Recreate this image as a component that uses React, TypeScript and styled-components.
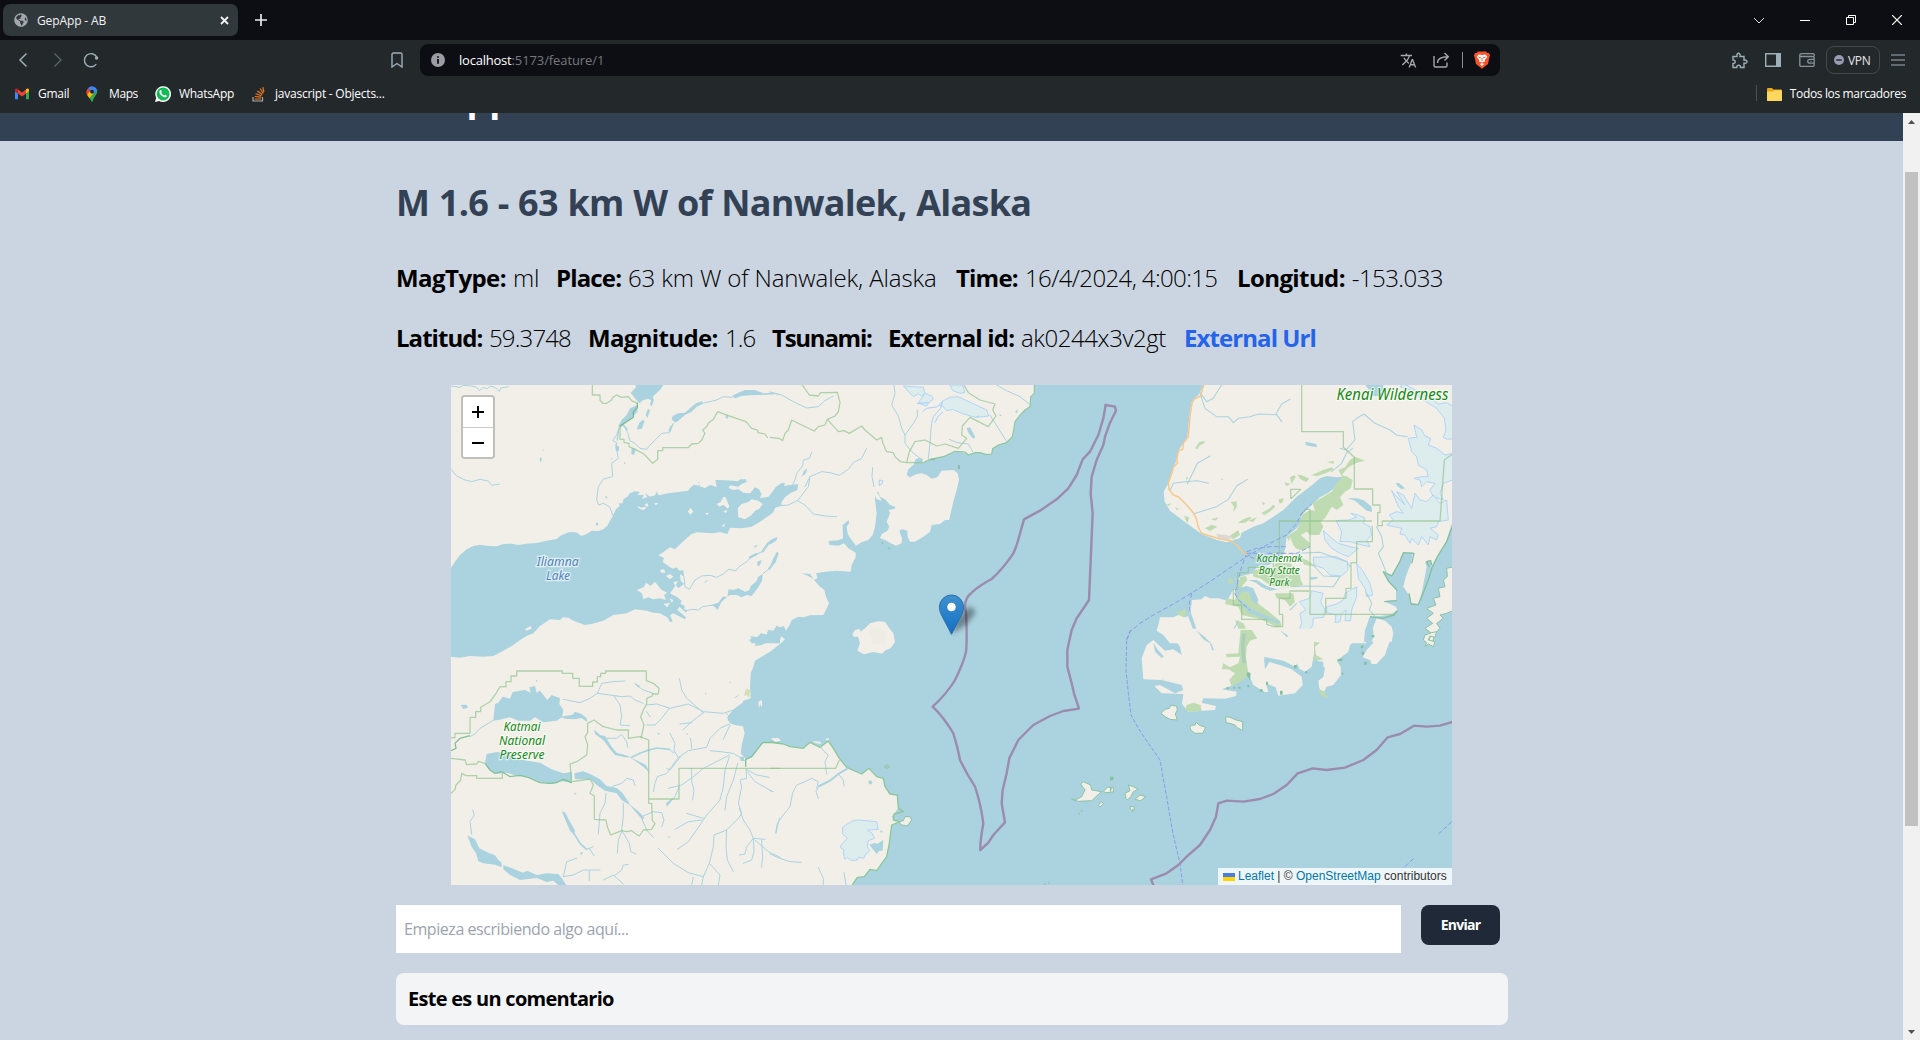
import React from "react";
import styled, { createGlobalStyle } from "styled-components";
import { FaGlobeAmericas } from "react-icons/fa";
import { MdTranslate } from "react-icons/md";

const GlobalStyle = createGlobalStyle`
  * { box-sizing: border-box; }
  html, body { margin: 0; padding: 0; }
  body { overflow: hidden; font-family: "Open Sans", "Noto Sans", sans-serif; }
`;

const Window = styled.div`
  width: 1920px;
  height: 1040px;
  display: flex;
  flex-direction: column;
  overflow: hidden;
`;

/* ---------- browser chrome ---------- */

const TabStrip = styled.div`
  height: 40px;
  background: #0d0e13;
  display: flex;
  align-items: center;
  padding: 0 18px 0 3px;
  color: #e8eaed;
`;
const Tab = styled.div`
  width: 235px;
  height: 32px;
  border-radius: 7px;
  background: #30383c;
  display: flex;
  align-items: center;
  padding: 0 9px 0 11px;
  font-size: 12px;
  color: #f1f2f3;
  svg { display: block; }
`;
const TabTitle = styled.span`
  flex: 1;
  margin-left: 9px;
  letter-spacing: -0.12px;
`;
const NewTab = styled.div`
  margin-left: 17px;
  display: flex;
`;
const WindowButtons = styled.div`
  margin-left: auto;
  display: flex;
  svg { display: block; }
`;
const Toolbar = styled.div`
  height: 40px;
  background: #23282b;
  display: flex;
  align-items: center;
  color: #9db0b8;
  svg { display: block; flex: none; }
`;
const NavButtons = styled.div`
  width: 391px;
  display: flex;
  align-items: center;
  padding-left: 18px;
`;
const Gap = styled.span<{ $w: number }>`
  width: ${(p) => p.$w}px;
  flex: none;
`;
const Omnibox = styled.div`
  width: 1080px;
  height: 32px;
  margin-left: 17px;
  border-radius: 8px;
  background: #0d0e13;
  display: flex;
  align-items: center;
  padding: 0 10px 0 11px;
  font-size: 13px;
  color: #ffffff;
`;
const Url = styled.span`
  margin-left: 14px;
  flex: 1;
  letter-spacing: -0.22px;
  span { color: #75787c; letter-spacing: -0.1px; }
`;
const Divider = styled.span<{ $h: number; $c: string }>`
  width: 1px;
  height: ${(p) => p.$h}px;
  background: ${(p) => p.$c};
`;
const ToolIcons = styled.div`
  margin-left: 231px;
  display: flex;
  align-items: center;
`;
const Vpn = styled.div`
  width: 54px;
  height: 28px;
  margin: 0 11px 0 11px;
  border: 1px solid #42494d;
  border-radius: 8px;
  display: flex;
  align-items: center;
  padding-left: 7px;
  gap: 4px;
  font-size: 12px;
  letter-spacing: -0.35px;
  color: #e6e7ea;
`;
const BookmarkBar = styled.div`
  height: 33px;
  background: #23282b;
  display: flex;
  align-items: flex-start;
  padding: 5px 14px 0 14px;
  font-size: 12px;
  line-height: 18px;
  color: #fff;
  svg { display: block; flex: none; }
`;
const Bookmark = styled.div<{ $w?: number; $ls: number; $g?: number }>`
  display: flex;
  align-items: center;
  height: 18px;
  gap: ${(p) => p.$g ?? 8}px;
  ${(p) => (p.$w ? `width: ${p.$w}px;` : "margin-left: 10px;")}
  letter-spacing: ${(p) => p.$ls}px;
  white-space: nowrap;
`;
const Push = styled.span`
  margin-left: auto;
`;

/* ---------- page ---------- */

const Viewport = styled.div`
  flex: 1;
  min-height: 0;
  display: flex;
`;
const Page = styled.div`
  width: 1903px;
  height: 927px;
  overflow: hidden;
  background: #cbd5e1;
`;
const Header = styled.header`
  height: 28px;
  overflow: hidden;
  background: #334155;
  padding-left: 372px;
`;
const Brand = styled.div`
  margin-top: -35px;
  font-size: 36px;
  line-height: 40px;
  font-weight: 700;
  color: #fff;
`;
const Main = styled.main`
  width: 1112px;
  margin-left: 396px;
  display: flex;
  flex-direction: column;
`;
const Title = styled.h1`
  margin: 42px 0 0;
  font-size: 36px;
  line-height: 40px;
  font-weight: 700;
  color: #334155;
  letter-spacing: -0.74px;
  word-spacing: 1px;
  white-space: nowrap;
`;
const Details = styled.div`
  margin-top: 40px;
  display: flex;
  flex-direction: column;
  gap: 28px;
`;
const DetailRow = styled.div`
  display: flex;
  height: 32px;
`;
const Detail = styled.div<{ $w: number }>`
  width: ${(p) => p.$w}px;
  display: flex;
  justify-content: flex-start;
  font-size: 24px;
  line-height: 30px;
  white-space: nowrap;
  color: #000;
`;
const Label = styled.b<{ $w: number; $ls: number }>`
  width: ${(p) => p.$w}px;
  font-weight: 700;
  letter-spacing: ${(p) => p.$ls}px;
`;
const Value = styled.span<{ $ls: number }>`
  font-weight: 350;
  letter-spacing: ${(p) => p.$ls}px;
`;
const ExternalLink = styled.a`
  font-size: 24px;
  line-height: 30px;
  font-weight: 700;
  color: #2563eb;
  letter-spacing: -0.92px;
`;
const MapBox = styled.div`
  position: relative;
  width: 1001px;
  height: 500px;
  margin: 30px 0 0 55px;
  overflow: hidden;
  background: #aad3df;
  svg.map { display: block; }
`;
const ZoomControl = styled.div`
  position: absolute;
  left: 10px;
  top: 10px;
  width: 34px;
  height: 64px;
  border: 2px solid rgba(0, 0, 0, 0.2);
  background-clip: padding-box;
  border-radius: 4px;
  overflow: hidden;
`;
const ZoomButton = styled.div`
  height: 30px;
  background: #fff;
  display: flex;
  align-items: center;
  justify-content: center;
  & + & { border-top: 1px solid #ccc; }
`;
const Attribution = styled.div`
  position: absolute;
  right: 0;
  bottom: 0;
  width: 234px;
  height: 17px;
  padding: 0 5px;
  background: rgba(255, 255, 255, 0.8);
  display: flex;
  align-items: center;
  font-family: "Liberation Sans", Arial, sans-serif;
  font-size: 12px;
  line-height: 17px;
  color: #333;
  white-space: pre;
  svg { margin-right: 3px; }
  a { color: #0078a8; }
`;
const CommentForm = styled.div`
  margin-top: 20px;
  display: flex;
  align-items: flex-start;
  gap: 20px;
`;
const CommentInput = styled.div`
  width: 1005px;
  height: 48px;
  padding: 0 8px;
  background: #fff;
  color: #9ca3af;
  font-size: 16px;
  line-height: 48px;
  letter-spacing: -0.44px;
`;
const SendButton = styled.div`
  width: 79px;
  height: 40px;
  border-radius: 8px;
  background: #1f2937;
  color: #fff;
  font-size: 14px;
  font-weight: 700;
  line-height: 39px;
  text-align: center;
  letter-spacing: -0.75px;
`;
const Comment = styled.div`
  margin-top: 20px;
  height: 52px;
  padding: 0 12px;
  border-radius: 8px;
  background: #f3f4f6;
  font-size: 20px;
  font-weight: 700;
  line-height: 52px;
  letter-spacing: -0.72px;
`;
const Scrollbar = styled.div`
  width: 17px;
  background: #f1f1f1;
  display: flex;
  flex-direction: column;
  align-items: center;
  svg { display: block; }
`;
const ScrollArrow = styled.div`
  height: 17px;
  width: 17px;
  display: flex;
  align-items: center;
  justify-content: center;
`;
const Thumb = styled.div`
  width: 13px;
  height: 654px;
  margin-top: 42px;
  margin-bottom: auto;
  background: #c1c1c1;
`;

/* ---------- map drawing ---------- */

const LAND = "#f2efe9";
const WATER = "#aad3df";
const FOREST = "#bedbb1";
const ICE = "#ddecec";

const Tile = ({ x, y, children }: { x: number; y: number; children: React.ReactNode }) => (
  <g transform={`translate(${x} ${y}) scale(.333333)`}>{children}</g>
);
const Land = ({ d }: { d: string }) => <path d={d} fill={LAND} />;
const Coast = ({ d }: { d: string }) => <path d={d} fill={LAND} stroke="#8cc3a4" strokeWidth="3" />;
const Lake = ({ d }: { d: string }) => <path d={d} fill={WATER} />;
const Wood = ({ d }: { d: string }) => <path d={d} fill={FOREST} />;
const Ice = ({ d }: { d: string }) => <path d={d} fill={ICE} stroke="#a5d0fa" strokeWidth="2.5" strokeLinejoin="round" />;
const River = ({ d, w = 3 }: { d: string; w?: number }) => (
  <path d={d} fill="none" stroke={WATER} strokeWidth={w} strokeLinejoin="round" strokeLinecap="round" />
);
const Border = ({ d }: { d: string }) => (
  <path d={d} fill="none" stroke="#8dc38a" strokeOpacity=".68" strokeWidth="3.8" strokeLinejoin="round" />
);
const Maritime = ({ d }: { d: string }) => (
  <path d={d} fill="none" stroke="#9b8bad" strokeWidth="7.2" strokeLinejoin="round" strokeLinecap="round" />
);
const Ferry = ({ d, dash = "14 7" }: { d: string; dash?: string }) => (
  <path d={d} fill="none" stroke="#8597ec" strokeWidth="2.8" strokeDasharray={dash} />
);

type LabelProps = { x: number; y: number; size: number; w: number; fill: string; children: string };
const MapLabel = ({ x, y, size, w, fill, children }: LabelProps) => (
  <text
    x={x}
    y={y}
    textAnchor="middle"
    textLength={w}
    lengthAdjust="spacingAndGlyphs"
    fontFamily='"Noto Sans", "Open Sans", sans-serif'
    fontStyle="italic"
    fontSize={size}
    fill={fill}
    stroke="#ffffff"
    strokeOpacity=".65"
    strokeWidth="2.4"
    paintOrder="stroke"
  >
    {children}
  </text>
);

const MapDrawing = () => (
  <svg className="map" width="1001" height="500" viewBox="451 385 1001 500">
    <defs>
      <linearGradient id="pin" x1="0" y1="0" x2="0" y2="1">
        <stop offset="0" stopColor="#3f92cf" />
        <stop offset="1" stopColor="#126fc6" />
      </linearGradient>
      <filter id="soft" x="-50%" y="-50%" width="200%" height="200%">
        <feGaussianBlur stdDeviation="2.6" />
      </filter>
    </defs>
    <rect x="451" y="385" width="1001" height="500" fill={WATER} />

    {/* northwest mainland */}
    <Tile x={440} y={380}>
      <Land d="M30 10H994V756H30Z" />
    </Tile>
    <Tile x={770} y={380}>
      <Land d="M-5 12H794L793 40 782 50 780 80 765 90 750 105 735 125 731 150 727 172 710 188 685 195 668 206 665 222 650 224 630 218 615 218 595 225 585 218 555 214 520 230 480 238 458 248 458 236 450 233 437 238 430 255 415 268 410 285 420 292 440 282 455 280 470 285 485 296 502 292 515 272 550 270 563 280 567 300 560 330 550 365 543 395 537 420 525 420 510 432 485 435 480 455 460 470 435 485 420 485 413 470 412 452 395 447 388 453 396 475 395 490 378 497 360 488 345 480 330 475 335 462 352 452 358 440 350 425 360 400 356 390 374 386 376 380 360 375 345 358 330 350 325 337 316 335 315 360 320 400 315 440 308 465 295 480 275 487 258 497 245 480 233 462 230 440 237 430 236 420 218 435 219 475 205 481 176 483 178 495 205 497 222 490 235 505 257 518 257 532 245 555 242 575 200 572 165 575 138 580 143 594 132 600 120 582 95 580 115 588 130 598 150 620 163 630 168 650 177 670 168 690 160 705 120 706 100 712 85 710 65 720 60 732 48 752 42 738 30 742 20 737 5 760-5 775Z" />
      <Land d="M310 335L316 330 330 352 335 362 320 358Z" />
    </Tile>
    <Tile x={440} y={630}>
      <Land d="M30-4H993L1012 10 1035 28 1020 42 990 65 965 80 945 92 940 110 932 130 930 170 932 205 910 212 905 235 880 238 862 262 864 272 885 285 908 285 914 310 905 345 902 370 918 388 935 380 955 355 968 338 1000 337 1022 341V768H30Z" />
      <Lake d="M928 18L950 22 965 10 980 14 985 0 1000 5 1010-4 1025 10 1020 34 985 34 965 45 945 48 948 35Z" />
      <Land d="M975 38L985 20 992 26 990 36Z M955 215L965 209 967 230 962 228 962 218 957 235Z" />
    </Tile>
    <Tile x={770} y={630}>
      <Land d="M-4 336L40 342 60 350 100 355 120 337 150 352 175 333 190 355 208 385 230 412 275 432 297 415 320 440 340 445 345 470 360 492 382 495 385 535 365 560 372 570 390 575 365 585 358 640 350 680 320 722 300 718 283 740 262 742 245 768H-4Z" />
      <Land d="M0 30L20 25 42 30 25 42 5 60 0 62Z M0-2L10-2 18 4 0 8Z M2 325L25 324 33 332 15 335Z M128 333L150 335 155 341 138 340Z M165 326L177 325 175 333Z" />
      <Land d="M248 12L255 0 268-3 272 5 285-5 300-20 325-26 345-25 358-5 370 10 375 35 362 55 348 60 335 71 310 66 282 73 262 62 270 40 264 20 250 20Z" />
      <path d="M295 0L325-10 350 15 345 45 310 40Z" fill="#e9ebdf" opacity=".5" />
    </Tile>

    {/* Iliamna lake and its surroundings */}
    <Tile x={440} y={380}>
      <Lake d="M30 568L45 545 60 525 80 508 100 498 120 494 145 498 170 499 190 492 215 491 235 495 260 491 290 489 320 482 350 477 360 468 385 457 400 456 412 458 422 467 432 466 445 459 455 452 475 453 490 448 502 437 510 422 518 408 528 388 540 377 535 370 548 370 550 358 562 350 570 340 585 334 600 336 592 344 612 346 606 356 622 352 615 340 630 350 645 346 650 335 656 346 685 340 720 335 745 332 750 324 762 314 780 318 772 304 765 300 778 308 776 318 795 324 812 314 830 322 826 300 860 301 895 304 900 298 918 298 920 306 905 312 895 320 870 316 866 324 880 330 895 328 910 338 930 340 945 322 957 328 965 342 960 355 985 350 1000 335 1024 308V376L1005 384 1000 397 990 405 960 425 935 440 905 445 870 443 862 462 840 456 820 460 770 457 755 462 745 470 725 488 705 508 690 502 665 520 655 526 672 534 668 546 690 562 700 566 710 562 718 572 730 570 732 590 720 582 722 602 732 612 715 625 708 615 690 640 710 650 725 662 722 672 735 678 732 688 742 690 738 698 718 680 712 690 738 712 735 718 700 700 690 705 698 724 690 727 682 712 660 700 640 698 620 692 585 688 560 700 520 705 490 722 455 732 435 735 400 722 385 713 370 712 360 720 330 718 300 738 280 760 260 768 240 780 220 795 190 812 160 828 130 830 90 828 60 833 30 830Z" />
      <Land d="M590 630L612 621 618 608 632 618 645 605 655 618 665 630 682 638 672 645 678 660 660 655 640 658 625 652 610 658 606 640Z M893 385L905 372 925 366 935 358 955 362 968 372 958 386 945 392 935 405 915 418 895 412Z" />
      <Land d="M592 378L605 383 615 380 618 385 610 390 598 386Z M614 372L622 370 626 378 618 380Z M642 370L655 368 648 376Z M830 372L842 366 850 352 856 350 860 360 868 378 864 386 850 374 838 380Z M743 395L752 384 760 395 752 404Z M795 400L806 398 803 406Z M832 435L845 438 856 430 852 440Z M256 746L272 738 275 746 258 752Z M850 394L862 390 858 400Z M908 330L922 328 930 336 920 338Z" />
      <Land d="M678 588L690 582 700 590 690 598Z M700 606L714 604 706 618Z M660 570L672 568 676 578 664 578Z M688 655L700 660 696 668Z M670 672L690 668 682 682Z" />
      <Lake d="M630 528L640 520 652 524 644 532Z M598 552L612 546 606 556Z" />
      <Lake d="M585 12H672L660 30 640 48 635 62 625 56 610 60 598 70 585 55 572 38 588 22Z M592 75V95L575 115 555 130 540 144 535 138 545 120 560 105 570 85Z M590 148L598 128 608 120 614 124 605 147Z M617 104L624 86 630 92 622 114Z M630 72L638 50 642 60 635 80Z M575 205L588 206 582 226 574 222Z M526 192L538 202 535 215 527 210Z M300 232L306 236 303 248 299 240Z M468 428L475 428 474 437 468 436Z M495 348L504 352 498 356Z M858 105L865 108 862 118 856 112Z M308 208H311V213Z M552 246L557 250 552 253Z M510 236L520 234 516 238Z" />
      <Lake d="M785 64L792 70 770 80 755 95 735 105 715 122 705 128 695 118 698 108 715 100 735 98 750 85 768 70Z M876 48L885 55 905 48 930 46 960 45 1003 43 1003 38 970 40 945 30 915 30 895 38Z M700 130L690 140 685 152 692 155Z" />
      <River d="M792 69L830 60 850 50 876 52M700 130L688 158 665 160 648 178 630 195 620 208 600 205 585 190 570 182 563 158 550 135 538 142 530 165 518 182 530 188 528 200 535 235 515 250 518 290 490 297 475 320 470 360 476 375 490 370 510 382 518 405" />
      <River w={4} d="M536 145L532 180M550 135L562 148" />
      <River d="M33 268L50 288 75 300 95 305 120 298 145 303 155 316 178 312M1003 40L1020 44M33 18L60 22 70 16 95 18 110 22 118 32 130 22 142 26 150 18 165 22 178 35 182 24 205 20" />
      <River w={7} d="M1008 476L985 490 968 514M950 522L930 532M1012 520L1004 545 988 566" />
      <River d="M968 514L935 530 920 545 895 562 888 572 865 568 850 582 830 592 810 586 785 588 765 600 748 628 735 620 732 590M740 692L755 688 775 690 788 680 815 676M795 608L802 600M988 566L970 580" />
      <Lake d="M968 582L966 602 955 622 945 635 935 648 920 645 905 652 890 645 870 645 860 652 845 665 832 690 826 682 812 675 835 668 848 650 862 650 866 628 880 630 895 625 915 635 928 630 932 618 948 605 955 590Z M952 545L965 540 960 556 952 558Z M942 498L955 495 945 503Z M928 780L940 770 955 772 962 760 980 765 985 750 1000 752 1010 740 1020 745V790H935Z" />
      <Border d="M457 12V45H480V60L488 70H500L515 60 518 52 530 45 545 52 565 50 575 62 592 70V80L580 95V112L540 138V178H552V187L567 190V200L585 208 612 222 638 250 653 238V212H668V203H745L755 192 775 190 785 180 795 160 788 150 800 140 805 130 820 118 833 95 865 107 918 125 935 145 952 150 955 158 975 162 983 174" />
      <path d="M592 68V85L580 95V112L540 138" fill="none" stroke="#6fb48e" strokeWidth="3" />
    </Tile>

    {/* coast west of the inlet */}
    <Tile x={770} y={380}>
      <Lake d="M0 345L18 320 35 310 45 308 42 318 55 316 85 312 82 330 60 340 45 352 30 372 0 392Z M0 480L22 472 18 482 0 494Z M0 560L10 535 22 515 26 522 12 548Z M95 290L102 272 112 265 108 280Z M590 145L600 142 616 172 610 176 596 160Z" />
      <Ice d="M400 18L430 50 445 42 455 48 465 40 460 22Z M465 40L485 48 490 58 478 66 470 78 445 70 452 58Z M520 62L540 52 565 50 590 62 625 78 650 90 656 108 640 110 615 112 575 100 548 88 530 92 520 80 505 76Z M540 15L548 32 570 40 585 38 578 15Z" />
      <path d="M518 62L512 85 490 110 484 135M520 95L505 108 495 128M440 70L475 68M458 95L470 85 505 80M328 300L338 302 336 312 328 316Z" fill="none" stroke="#a5d0fa" strokeWidth="3" />
      <River d="M0 36L35 45 70 65 110 84 145 80 165 62 190 48M0 380L55 375 85 360 92 350 115 320 120 290 155 275 180 278 208 286 235 268 250 248 275 235 290 205M82 362L105 375 130 402 165 408 200 410M125 218L118 235 100 240 98 258 80 280 75 300 62 325 58 340M308 262L306 290 312 320M372 15L375 40 365 75 385 108 395 145 405 165 405 190 425 215 450 235M405 165L430 130 443 108 442 90M484 135L480 190 475 235M680 15L710 32 750 50 778 72M660 105L685 145 712 188M538 178L560 188 595 192 608 215M120 290L105 320" />
      <Border d="M95 12L118 45 145 48 152 38 175 38 202 37 210 68 205 95 195 108 172 118 205 155 222 152 238 160 275 138 285 150 320 180 335 172 338 188 350 215 370 218 375 230 392 245 410 248H460M0 172L30 176 38 182 45 160 55 150 65 120 95 135 133 153 145 140 165 135 172 118M410 248L418 215 435 185 465 180 500 198 525 192 565 205 590 175 575 165 577 138 600 112 625 125 655 140 678 108 668 90 675 72 630 60 595 38 582 15" />
      <path d="M460 248L480 238 520 230 555 214 585 216 595 225 615 218 630 218 650 224 665 222 668 206 685 195 710 188 727 170 731 150 735 125 750 105 765 90 780 80 782 50 793 40V12" fill="none" stroke="#8dc79b" strokeWidth="3.4" />
      <Lake d="M688 102L696 106 690 109Z M735 95L743 88 742 100Z M618 110L628 105 622 114Z" />
      <path d="M564 256H570V267H564ZM352 500L362 506 358 509ZM335 485L340 488 337 494ZM482 236H495V241H482Z" fill="#84c0a0" />
    </Tile>

    {/* Katmai */}
    <Tile x={440} y={630}>
      <Lake d="M160 272L165 222 175 218 188 200 210 206 218 186 255 180 272 188 268 172 285 168 290 188 300 182 322 210 335 195 360 205 358 222 370 240 366 262 350 272 310 277 285 262 270 272 235 272 210 262 175 270Z M362 260L398 254 405 245 425 252 440 265 442 277 425 264 405 268 375 266Z M62 225L80 224 84 233 70 237Z M287 150H292L289 158Z" />
      <Lake d="M135 398L140 372 170 366 200 370 235 388 300 398 335 418 370 430 395 426 396 458 360 453 340 462 300 455 265 440 230 438 200 428 165 432 150 420Z M403 430L430 424 455 434 480 448 500 468 530 474 548 490 565 515 570 526 545 510 530 490 495 482 470 465 450 448 405 448Z M565 520L600 548 612 562 608 570 590 550Z M582 158L600 168 596 173Z" />
      <Lake d="M82 616L105 628 118 655 145 668 165 676 175 690 185 698 185 712 165 704 130 700 115 694 108 670 95 650Z M190 705L220 716 248 728 262 722 290 735 320 730 355 732 368 748 380 768H358L340 752 320 756 290 744 240 750 210 735 190 718Z M365 544L376 548 390 575 405 602 402 615 390 602Z M404 487L410 491 404 494Z M420 668L430 666 424 676Z M462 298L480 315 495 318 515 350 530 368 555 375 575 382 555 382 525 375 508 355 490 330 465 312Z M678 520L700 502 690 520 680 528Z M570 382L600 396 618 405 630 430 610 410Z" />
      <River w={5} d="M402 610L420 640 440 658M575 382L600 370 620 362 650 354 688 358" />
      <River d="M440 658L460 650M448 655L462 677M90 320L105 312 120 295 145 280 160 270M370 208L420 218 450 205 472 190 485 160 520 155 555 153M472 190L510 195 545 200 570 198 585 210 610 220M522 198L540 225 545 260 540 285 568 287M585 162L610 180 640 190M98 540L103 555 90 575 95 612M620 225L650 222 690 235 745 222 790 245 850 250 880 240M718 145L725 180 740 205 790 248M688 235L665 265 645 285 620 285M620 245L630 260M790 248L755 275 728 300M720 282L755 278M500 325L530 325 545 313 560 335 563 352M755 355L752 325M690 310L705 340 702 362 715 382 745 362 800 352 810 325 840 295 868 282M870 285L850 328M722 380L690 420 680 415M688 358L702 370M715 382L695 410 680 430 652 440 645 460 640 485M868 375L820 400 790 415 760 440 725 465 685 475M810 362L850 366 880 370 915 392M755 415V455L762 480 758 510M718 470L705 500 680 528M868 380L855 420 850 470 840 510 800 555 770 600 745 635 712 658M785 570L745 575 705 598M740 550L790 565M893 400L880 450 860 500 855 540M918 420L920 445 900 450 905 470 895 520 905 550 895 565 860 600 822 615 820 650 808 700 790 740M860 600L858 650 862 690 880 725M898 535L910 570 930 600 940 625 975 628M940 625L920 650 915 672 898 675M940 625L942 665 935 690 910 700M965 630L968 680 965 712M945 630L985 665 1020 682M655 655L700 700 745 728 790 740 785 765M808 700L840 735 835 765M755 765L760 742M918 418L950 435 988 442M922 425L945 455 998 485M1018 565L1008 610M498 490L495 520 480 550 475 612M515 470L545 460 560 445 580 450 585 467M550 520V560L545 600 568 640 572 665 588 672M545 605L535 630 532 670M605 565L620 600 640 622M605 560L640 545 665 548 672 570 665 590M370 740L380 695 410 685M370 740L400 735 430 720 480 720M448 722V752M490 750L520 735 550 762M522 738L545 720 550 705 565 703M858 250L875 265 890 238" />
      <path d="M918 175L930 180 928 205 920 195 912 198ZM908 182L918 177" fill="#d5dfb5" />
      <Lake d="M865 260L885 235 915 212V290L885 285 870 280Z M652 308L660 310 656 315Z M868 155L874 157 870 160Z M682 618L690 620 688 625Z M900 380H912V393H902Z M740 308L745 312 740 315Z M795 188L800 191 796 194Z M880 205L900 192 890 202Z" />
      <Border d="M33 323H45V310H90V262H107V245H122V232L150 215 165 195 180 170H198V155H213V138H230V123H367V130H398V145H418V169H458V156H472V140H482V130H497V123H619V152L640 160 657 175 655 192H637V198L620 205V222L610 240 602 260 612 285 603 325" />
      <Border d="M33 385L75 390 80 404 110 402 115 394 135 400M395 458L390 402 410 395 440 375 443 345 435 320 443 308 443 280 462 270 490 290 530 300H565V325L600 320 626 330V507H717V415H1020M33 490L45 478 48 465 62 450 65 430 78 437H110V445H187V430M397 455L450 447 460 465 450 490 463 498V568L498 570 502 590 512 615 545 602 560 605 575 602 588 612 598 618 610 600 635 598 645 580 637 572 635 520H626V507" />
      <path d="M33 362L48 355 45 340 60 325 90 317M135 400L150 420 165 430 185 425 210 440 240 436 265 442 300 458 330 460 350 458 370 448 395 458M917 410V388L935 380 968 338 1000 337 1022 341" fill="none" stroke="#83c196" strokeWidth="4" />
    </Tile>

    {/* south cape */}
    <Tile x={770} y={630}>
      <path d="M0 336L40 342 60 350 100 355 120 337 150 352 175 333 190 355 208 385 230 412 275 432 297 415 320 440 340 445 345 470 360 492 382 495 385 535 400 545 372 552 370 570 390 575 365 585 358 640 350 680 320 722 300 718 283 740 262 742 245 768" fill="none" stroke="#8dc79b" strokeWidth="4" strokeLinejoin="round" />
      <Coast d="M388 575L400 572 405 560 420 560 425 570 412 588 392 584Z" />
      <Ice d="M218 612L218 592 235 580 250 572 265 570 320 575 325 598 292 600 305 608 314 625 295 632 292 650 300 662 285 675 282 685 265 682 262 690 245 692 232 682 225 688 220 672 222 660 210 652 218 640 232 625Z" />
      <Lake d="M298 644L315 638 322 642 340 630 338 662 328 662 320 672Z M294 455L302 450 308 458 300 464Z M330 600L340 605 333 608Z" />
      <River w={6} d="M232 416L205 432 180 452 148 468" />
      <River d="M148 468L138 485 145 505M140 475L145 455 125 445 105 455 80 465 68 488 60 530 40 555 22 580 17 608M205 432L220 450 222 468M150 345L160 362 175 375 165 395 170 432M0 672L30 685 60 695 95 697M145 712L160 745V765M222 728L228 765M0 482L10 485" />
      <Border d="M0 415H197L208 390M350 405L358 410 350 415 344 410Z" />
      <Coast d="M905 508L920 508 935 500 945 480 932 462 940 455 962 465 965 480 995 485 978 500 965 512 925 514Z M985 525L995 516 1001 520 990 531Z M1000 484L1012 472 1030 472 1030 486 1008 488Z" />
      <path d="M933 540L939 542 934 546ZM926 548L930 550 927 554ZM820 762L826 760 826 766ZM835 756L840 759 836 761Z" fill="#84c0a0" />
    </Tile>

    {/* Kenai peninsula */}
    <Tile x={1110} y={380}>
      <Land d="M284 12L265 45 245 65 238 110 232 170 205 212 200 240 188 265 175 310 161 335 164 365 180 392 230 430 275 462 320 480 350 487 390 474 395 458 430 440 460 430 520 390 560 350 600 320 630 295 650 288 680 292 697 290 690 310 655 338 630 352 608 372 585 395 575 405 572 430 560 445 530 470 525 510 510 540 475 555 440 560 430 580 385 590 385 620 370 628 350 665 345 660 325 655 300 655 285 648 275 658 245 660 245 672 240 690 235 708 225 712 205 705 190 712 150 712 145 735 140 752 160 765 180 790H768L768 750 778 712 800 708 820 725 845 735 848 760V700L862 690 858 680 822 664 858 660V630L835 605 820 575 845 585 870 545 880 520 908 517 903 550 887 590 880 620 900 650 905 672 925 672 935 640 950 560 945 545 960 540 965 560 1000 510 1010 480 1026 430H1032V12Z" />
      <Lake d="M1026 445L1010 490 985 525 967 560 955 600 935 650 925 672 905 670 880 625 865 630 862 700 835 705 780 712 765 750 762 785H1032V555Z" />
      <Land d="M785 785L795 762 788 745 800 715 825 722 845 740 850 760 845 785Z" />
      <Coast d="M1032 560L1010 565 1012 590 1000 600 1005 620 985 625 990 650 970 655 978 675 950 685 970 700 950 715 968 730 945 745 965 760 955 785H968L975 760 990 745 980 730 1000 715 990 705 1010 700 1032 690Z" />
      <path d="M1032 425L1010 485 985 525 967 560 955 600 935 650 925 674 903 672 897 640M905 550L912 520 880 518 868 548 845 588 820 575 836 604 862 632M958 560L950 545 962 542 965 555M862 692L852 705 818 715 780 710M823 665L860 662" fill="none" stroke="#84bf9c" strokeWidth="4" strokeLinejoin="round" />
      <path d="M764 12L790 48H820V12Z" fill={WATER} />
      {/* woods */}
      <Wood d="M685 270L705 262 720 240 735 230 765 242 740 248 715 262 695 285 712 290 728 300 722 325 705 335 690 352 700 375 680 390 665 380 645 415 632 425 640 440 628 465 600 465 590 455 572 465 600 490 600 510 570 510 545 500 530 470 560 450 572 430 575 405 600 390 615 392 608 370 640 350 665 335 680 310 697 292Z" />
      <Wood d="M495 550L540 548 548 558 520 575 535 585 550 560 570 585 572 600 580 615 545 622 515 622 480 615 450 595 430 590 428 572 455 565 490 570Z M390 590L408 588 412 600 395 620 410 635 440 650 450 675 470 690 510 722 515 738 500 742 470 725 440 715 395 705 385 680 345 672 350 655 375 660 380 640Z M495 640L550 640 555 665 540 680 525 660 500 655Z M560 530L590 540 620 560 585 555Z" />
      <Wood d="M353 598L368 595 370 610 356 612Z M200 695L225 688 232 700 220 712 200 700Z M375 720L400 730 415 760 410 785H390L385 745Z M255 205L268 186 285 182 280 192 270 195 262 208Z M540 292L552 286 558 290 550 302 545 312Z M562 284L575 286 598 296 588 306 572 298Z M605 285L640 270 665 262 672 268 650 278 620 289Z M650 245L672 243 670 252Z M362 366L380 364 380 382 370 396 372 380Z M355 470L385 450 390 465 370 478Z M168 374L182 370 178 378Z M195 382L208 387 200 390Z M228 292L234 292 230 305Z M335 295L340 298 334 302Z M382 430L400 418 418 410 425 414 405 428Z M455 398L475 388 490 374 496 380 478 396 462 406Z M222 408L238 412 232 430Z M285 445L305 434 322 440 300 453Z M506 358L522 354 516 370 508 370Z M522 307L542 311 530 318Z M415 422L440 412 430 426Z M302 418L325 412 318 422Z M455 365L465 370 460 376Z" />
      <Land d="M415 605L435 605 455 625 465 655 450 675 430 655 420 625Z M540 470L550 495 565 515 545 520 535 495Z M600 500L605 530H545L570 515Z" />
      <path d="M318 462L350 465 368 472 355 480 325 474Z" fill="#dcd9d4" />
      <Lake d="M415 600L440 600 470 618 500 628 540 622 480 632 455 622 438 608Z M385 625L410 618 430 625 445 660 440 675 425 660 418 640 400 632 380 650 400 668 430 690 465 705 510 725 505 732 460 715 420 700 392 672 372 640Z M712 355L740 355 760 360 785 380 786 396 770 392 750 375 735 362Z M586 185L620 192 620 202 588 196Z M858 308L868 310 885 325 875 328 862 318Z M600 592L625 590 620 596 602 600Z M240 690L250 720 262 755 260 780 248 745 235 710Z" />
      {/* ice fields */}
      <Ice d="M870 20L900 30 940 60 980 85 1003 115 1008 150 1000 172 1012 178 1030 176V80L1010 68 985 72 960 52 930 38 905 24 880 12Z" />
      <Ice d="M912 135L935 150 945 168 962 175 955 195 980 205 1005 225 1028 220V300L1000 310 990 340 1000 360 970 350 960 330 975 310 950 305 935 320 930 300 912 295 935 290 955 290 950 270 925 255 920 230 905 215 895 175 920 172Z" />
      <Ice d="M845 332L860 350 885 375 860 335 880 345 905 385 915 340 930 360 950 365 970 345 990 370 1010 360 1015 420 985 425 980 440 960 445 985 465 980 480 960 470 955 495 935 470 925 495 905 475 900 490 885 465 870 462 875 445 830 435 850 420 838 405 860 395 880 400 865 380Z" />
      <Ice d="M640 452L660 470 685 490 720 500 745 505 715 530 690 520 665 505 645 480Z M678 422L715 420 740 412 722 400 745 405 765 415 760 430 780 440 785 465 770 480 780 500 755 495 720 485 690 485 695 455Z M740 550L760 575 780 610 788 645 770 650 765 625 745 595Z M610 532L680 530 712 545 714 570 695 588 660 585 640 565 612 555Z M740 620V650L725 690 722 722 705 722 708 690 695 700 690 725 675 728 678 705 650 698 650 680 680 672 700 660 705 640Z M605 632L640 640 632 665 645 690 640 712 610 715 608 738 590 755 568 750 575 728 570 700 588 690 568 665 598 655Z" />
      <River w={3.2} d="M565 520L630 517 680 535 710 545 720 560M610 555L640 588 690 590M540 690L560 670M690 205L708 210 735 180 728 125 740 115 762 102 795 130 840 150 860 165 892 170M728 205L710 218 695 250 665 275M270 38L290 65 310 55 325 30 335 15M270 40L285 85 320 110 355 110 370 128 385 115 420 110 445 102 500 104 515 125M498 102L515 72 540 58M180 332L190 310 225 305 262 302 295 310M232 312L250 275 262 250 300 228M250 402L280 392 320 380 355 358 380 318 412 298M800 440L815 470 820 500 805 520 820 555 830 580M770 640L785 670 778 690 795 710M690 590L670 620 590 618 550 620M385 722L370 750M560 520L545 522" />
      <Border d="M575 12V155H700V202L733 232V327H788V375H810V398H803V437H817V423H990L1003 240 1028 222M786 423H508V518H490V560M600 388V703H855M600 388H587L572 405M542 355V328H572L542 357M508 518L525 520M787 437V485H740V548H723V625H708V655H647V703M600 633H540V655H508V703H518V740H490L470 733V718H395V675H370V628H383V578H415V562H490" />
      <Ferry d="M50 780L60 755 90 730 130 705 190 672 240 642 300 605 350 570 410 530 470 495 530 465 560 430 575 400 605 372M410 520H560L600 500M410 520L395 560 385 600 375 640 385 660 420 690M410 515L440 505 480 500 530 500M245 640L238 670 240 695M420 530L450 545 480 550" />
      <path d="M282 12L272 48 252 58 246 70 240 110 235 170 220 190 218 208 206 212 200 240 203 248 190 262 187 275 175 310 177 328 190 345 205 350 225 370 245 392 258 412 265 442 275 460 300 468 330 477 362 482 380 495 400 518 412 524" fill="none" stroke="#f7c98c" strokeWidth="4.5" strokeLinejoin="round" />
    </Tile>

    <Tile x={1110} y={630}>
      <Land d="M143-4L160 10 185 18 210 50 215 75 190 58 165 62 130 30 110 45 95 85 100 148 155 150 215 165 220 180 195 190 150 165 133 168 155 190 220 192 216 222 235 245 315 240 318 228 275 218 280 205 345 206 378 198 380 185 335 178 370 165 400 145 415 130 430 165 465 187 475 185 468 160 497 172 505 197 555 190 578 165 575 140 545 118 510 105 475 95 460 80 520 92 585 125 605 110 612 70 625 95 645 115 640 140 625 152 628 175 640 190 650 170 670 165 693 135 692 110 680 92 715 65 720 45 750 20 765-4Z" />
      <Land d="M790-4H845L845 20 835 45 825 75 800 102 785 102 780 90 758 82 770 60 790 38Z" />
      <Lake d="M130 38L142 58 162 80 155 84 135 65Z M258 0L285 22 305 42 312 62 306 60 300 40 280 28Z M462 85L480 92 465 118Z M510 0L535 18 530 22Z M560 100L568 115 555 120Z M612 92L640 95 640 122 625 128 612 110Z" />
      <Wood d="M392 0H425L442 25 420 32 410 50 408 80 412 110 415 135 400 150 365 168 358 150 375 130 355 118 335 118 340 100 360 112 385 100 390 80 350 82 348 72 385 70Z M230 225L250 218 272 225 275 242 240 246 225 240Z M612 35L630 38 615 50 618 75 640 88 612 92Z M625 180L640 182 655 205 635 198Z M155 150L160 148 160 160Z" />
      <path d="M402 10L398 50 402 100" fill="none" stroke="#a9cfb9" strokeWidth="10" />
      <path d="M410 135L420 150 422 130 412 125ZM683 88L697 85 697 93 683 93ZM552 105H560V115H552ZM510 182H518V194H510ZM468 155H474V165H468ZM752 48L760 45V55H752ZM762 95H770V104H762ZM350 172H356V178H350ZM370 170H376V176H370ZM385 170H392V176H385ZM450 178H458V185H450ZM585 124H592V130H585ZM695 128H700V134H695ZM785 15H793V22H785ZM755 65H762V74H755ZM412 165H418V172H412ZM0 440L10 440 10 450 0 452ZM0 472L5 475 3 485 0 485Z" fill="#84c0a0" />
      <Coast d="M153 250L165 238 178 235 182 226 200 228 202 240 196 252 202 270 180 268 165 260Z M240 292L245 285 255 286 258 276 268 286 287 292 278 310 255 310 242 300Z M347 260L360 262 378 270 398 275 398 302 380 292 375 285 360 280 348 278Z M48 505L45 490 60 482 55 465 70 470 85 478 70 485 62 500 52 510Z M75 508L90 495 108 500 92 512Z" />
      <Coast d="M60 530L72 530 73 540 68 538 68 546 62 540Z M945 15L965 8 980 5 975 22 960 18 955 30 975 35 970 50 955 42 945 50 950 38 940 30Z" />
      <Ferry d="M62 0L50 30 48 120 55 190 63 255 85 295 115 340 150 390 157 430 170 500 185 590 200 660 210 700 218 765" dash="12 5" />
      <Ferry d="M870 725L895 700 915 682M985 612L1010 590 1026 574" />
      <Maritime d="M132 770L123 748 170 730 205 705 230 680 270 645 300 600 318 560 325 520 350 512 400 515 450 507 490 492 530 465 563 430 608 415 650 420 705 413 760 390 800 360 833 322 870 312 912 287 950 290 990 287 1030 275" />
    </Tile>

    <Tile x={770} y={380}>
      <Maritime d="M1007 75L1000 115 985 165 960 215 938 238 920 285 895 325 860 358 810 392 762 418 750 460 Q742 495 730 520 700 565 665 597 630 615 605 638 578 658 588 700 592 780 588 815 580 850 555 900 530 942 488 980 520 1010 550 1060 565 1110 570 1140 588 1178 615 1220 632 1270 640 1330 630 1385 631 1410" />
      <Maritime d="M631 1410L655 1388 670 1365 705 1327 695 1270 698 1230 710 1180 718 1135 745 1080 790 1035 840 1008 880 993 927 986 912 940 905 910 892 860 892 810 905 750 920 715 957 660 960 590 968 400 962 340 965 290 980 240 1000 195 1005 170 1020 128 1038 92 1035 80 1007 75" />
    </Tile>

    <MapLabel x={557.7} y={565.7} size={12.5} w={42} fill="#4f83b9">Iliamna</MapLabel>
    <MapLabel x={558} y={580.2} size={12.5} w={24} fill="#4f83b9">Lake</MapLabel>
    <MapLabel x={522} y={730.5} size={12.5} w={37} fill="#158a15">Katmai</MapLabel>
    <MapLabel x={522} y={744.8} size={12.5} w={46} fill="#158a15">National</MapLabel>
    <MapLabel x={522} y={759.2} size={12.5} w={45} fill="#158a15">Preserve</MapLabel>
    <MapLabel x={1392.5} y={400.2} size={15.5} w={112} fill="#158a15">Kenai Wilderness</MapLabel>
    <MapLabel x={1279.3} y={561.8} size={10.2} w={45.7} fill="#158a15">Kachemak</MapLabel>
    <MapLabel x={1279.3} y={573.8} size={10.2} w={41} fill="#158a15">Bay State</MapLabel>
    <MapLabel x={1279.3} y={585.8} size={10.2} w={20} fill="#158a15">Park</MapLabel>

    {/* marker */}
    <path d="M952 634L957 617 970 606 976 612 967 624Z" fill="#000" opacity=".36" filter="url(#soft)" />
    <path
      d="M951.5 634.3L942.2 616.5C940.2 612.7 939.4 610.2 939.4 607A12.1 12.1 0 0 1 963.6 607C963.6 610.2 962.8 612.7 960.8 616.5Z"
      fill="url(#pin)"
      stroke="#2d6a9f"
      strokeWidth=".9"
    />
    <circle cx="951.5" cy="607" r="4.7" fill="#fff" stroke="#2c79bb" strokeWidth=".8" />
  </svg>
);

/* ---------- icons ---------- */

const line = (w: number, h: number, d: string, sw = 1.3, c = "currentColor") => (
  <svg width={w} height={h} viewBox={`0 0 ${w} ${h}`} fill="none" stroke={c} strokeWidth={sw}>
    <path d={d} />
  </svg>
);

const GmailIcon = () => (
  <svg width="16" height="16" viewBox="0 0 16 16">
    <path d="M1 4v9.2h3V7.5L1 5z" fill="#4285f4" />
    <path d="M12 7.5v5.7h3V5z" fill="#34a853" />
    <path d="M12 3.6V7.6L15 5.3V4c0-1.7-1.8-2-3-.9z" fill="#fbbc04" />
    <path d="M4 3.4L8 6.4l4-3v4.2l-4 3-4-3z" fill="#ea4335" />
    <path d="M1 4c0-1.7 1.8-2 3-.8v4.4L1 5.3z" fill="#c5221f" />
  </svg>
);
const MapsIcon = () => (
  <svg width="12" height="16" viewBox="0 0 12 16">
    <path d="M11 3.600C12.300 8.500 8 10 6.800 15.200 6.500 15.900 5.600 15.900 5.300 15.200 4.900 13.900 4 13 3.300 12z" fill="#34a853" />
    <path d="M2 2.300L4.500 4.600 1 9A6 6 0 0 1 2 2.300z" fill="#ea4335" />
    <path d="M2 2.300A5.400 5.400 0 0 1 11.300 4.200L7 8.500 4 4.500z" fill="#4285f4" />
    <path d="M1 8.700L4 5 7.400 7.700 3.300 12.200Z" fill="#fbbc04" />
    <circle cx="6" cy="5.700" r="1.900" fill="#23282b" />
  </svg>
);

export default function App() {
  return (
    <Window>
      <GlobalStyle />
      <TabStrip>
        <Tab>
          <FaGlobeAmericas size={14} color="#a2a6ad" />
          <TabTitle>GepApp - AB</TabTitle>
          {line(9, 9, "M1 1L8 8M8 1L1 8", 1.8)}
        </Tab>
        <NewTab>{line(12, 12, "M6 0V12M0 6H12", 1.7)}</NewTab>
        <WindowButtons>
          <svg width="10" height="10" viewBox="0 0 10 10" fill="none" stroke="#e0e0e0"><path d="M0 3L5 8L10 3" /></svg>
          <Gap $w={36} />
          <svg width="10" height="10" viewBox="0 0 10 10" fill="none" stroke="#fff"><path d="M0 5.500H10" /></svg>
          <Gap $w={36} />
          <svg width="10" height="10" viewBox="0 0 10 10" fill="none" stroke="#fff"><path d="M.5 2.500H7.500V9.500H.5ZM2.500 2.500V.5H9.500V7.500H7.500" /></svg>
          <Gap $w={36} />
          <svg width="10" height="10" viewBox="0 0 10 10" fill="none" stroke="#fff" strokeWidth="1.200"><path d="M0 0L10 10M10 0L0 10" /></svg>
        </WindowButtons>
      </TabStrip>

      <Toolbar>
        <NavButtons>
          {line(10, 16, "M8.500 1.500L2 8L8.500 14.500", 1.5)}
          <Gap $w={25} />
          {line(10, 16, "M1.500 1.500L8 8L1.500 14.500", 1.3, "#5b656a")}
          <Gap $w={20} />
          <svg width="16" height="16" viewBox="0 0 16 16" fill="none" stroke="currentColor" strokeWidth="1.400">
            <path d="M13.300 12.200A6.600 6.600 0 1 1 13.700 4.800" />
            <circle cx="13.600" cy="6" r="1.700" fill="currentColor" stroke="none" />
          </svg>
        </NavButtons>
        {line(12, 16, "M1 15V2.500Q1 1 2.500 1H9.500Q11 1 11 2.500V15L6 11.500Z", 1.4)}
        <Omnibox>
          <svg width="14" height="14" viewBox="0 0 14 14">
            <circle cx="7" cy="7" r="7" fill="#9b9da5" />
            <path d="M7 6V10.700M7 3.200V4.800" stroke="#0d0e13" strokeWidth="1.800" fill="none" />
          </svg>
          <Url>localhost<span>:5173/feature/1</span></Url>
          <MdTranslate size={17} color="#a4a7ad" />
          <Gap $w={16} />
          {line(17, 16, "M1 4V13.500Q1 15 2.500 15H12.500Q14 15 14 13.500V10.500M4.500 11C4.500 7 7.500 4.800 15 4.800M11.500 1L15.300 4.800L11.500 8.500", 1.4, "#a4a7ad")}
          <Gap $w={12} />
          <Divider $h={16} $c="#8c8f94" />
          <Gap $w={11} />
          <svg width="16" height="18" viewBox="0 0 16 18">
            <path d="M4 .5H12L13.500 2 15 2 16 4.500 15.300 6.500 14 13 8 17.800 2 13 .7 6.500 0 4.500 1 2 2.500 2Z" fill="#fb542b" />
            <path d="M4.500 3.500L8 4 11.500 3.500 13.300 6 10.700 9 11 10.500 8 11.500 5 10.500 5.300 9 2.700 6ZM8 12L10 13 8 15 6 13Z" fill="#fff" />
            <path d="M4.500 6L7 7M11.500 6L9 7M8 7V10" stroke="#fb542b" strokeWidth=".9" />
          </svg>
        </Omnibox>
        <ToolIcons>
          {line(17, 17, "M2 4.500H6C5 .2 10 .2 9 4.500H13V8.200C17 7.200 17 12 13 11.200V15.500H9.500C10 12.400 5.300 12.400 5.800 15.500H2V11.500C5 12 5 7.500 2 8Z", 1.4)}
          <Gap $w={17} />
          <svg width="16" height="16" viewBox="0 0 16 16" fill="none" stroke="currentColor" strokeWidth="1.400">
            <path d="M.7 1.700H15.300V14.300H.7Z" /><path d="M11 1H16V15H11Z" fill="currentColor" stroke="none" />
          </svg>
          <Gap $w={18} />
          {line(16, 16, "M15.200 4.300V3Q15.200 1.700 14 1.700H2.500Q.8 1.700 .8 3.200 .8 4.500 2.500 4.500H13.500Q15.200 4.500 15.200 6V13Q15.200 14.300 14 14.300H2Q.8 14.300 .8 13V3M15 7.400H11Q8.700 7.400 8.700 9.300 8.700 11.200 11 11.200H15M11.500 9.300H12.500", 1.3, "#84939a")}
          <Vpn>
            <svg width="10" height="10" viewBox="0 0 10 10"><circle cx="5" cy="5" r="5" fill="#9a9bb4" /><path d="M2.200 5H7.800" stroke="#23282b" strokeWidth="1.400" /></svg>
            VPN
          </Vpn>
          {line(14, 12, "M0 1H14M0 6H14M0 11H14", 1.2)}
        </ToolIcons>
      </Toolbar>

      <BookmarkBar>
        <Bookmark $w={72} $ls={-0.25}><GmailIcon />Gmail</Bookmark>
        <Bookmark $w={69} $ls={-0.4} $g={11}><MapsIcon />Maps</Bookmark>
        <Bookmark $w={97} $ls={-0.3}>
          <svg width="16" height="16" viewBox="0 0 16 16">
            <path d="M0 16L1.200 11.800A7.900 7.900 0 1 1 4.200 14.900Z" fill="#fff" />
            <circle cx="8.100" cy="7.900" r="6.500" fill="#12b954" />
            <path d="M5 4.300Q6.200 3.600 6.700 5.300L6.300 6.800Q7.200 8.700 9.200 9.500L10.300 8.700Q12.300 9.300 11.700 10.400 10.500 12 8.300 10.900 5.500 9.500 4.600 7.300 3.900 5.500 5 4.300Z" fill="#fff" />
          </svg>
          WhatsApp
        </Bookmark>
        <Bookmark $w={140} $ls={-0.24} $g={10}>
          <svg width="13" height="15" viewBox="0 0 13 15" fill="none">
            <path d="M1 10V14H10.500V10" stroke="#a9adb0" strokeWidth="1.200" />
            <path d="M2.700 12H9M2.800 9.500L9.100 10.200M3.600 6.700L9.600 8.700M5.300 3.900L10.300 7.500M8 1.500L11.300 6.300M10.800 .2L11.900 5" stroke="#ef7a20" strokeWidth="1.200" />
          </svg>
          javascript - Objects...
        </Bookmark>
        <Push />
        <Divider $h={16} $c="#4b5155" />
        <Bookmark $ls={-0.36}>
          <svg width="15" height="13" viewBox="0 0 15 13">
            <path d="M0 1Q0 0 1 0H5L6.500 1.500H14Q15 1.500 15 2.500V12Q15 13 14 13H1Q0 13 0 12Z" fill="#e8a51d" />
            <path d="M0 3.500L6 3.500 7 2.300H14Q15 2.300 15 3.300V12Q15 13 14 13H1Q0 13 0 12Z" fill="#ffd75e" />
          </svg>
          Todos los marcadores
        </Bookmark>
      </BookmarkBar>

      <Viewport>
        <Page>
          <Header><Brand>GeoApp</Brand></Header>
          <Main>
            <Title>M 1.6 - 63 km W of Nanwalek, Alaska</Title>
            <Details>
              <DetailRow>
                <Detail $w={160}><Label $w={117} $ls={-0.55}>MagType:</Label><Value $ls={-0.2}>ml</Value></Detail>
                <Detail $w={400}><Label $w={72} $ls={-0.85}>Place:</Label><Value $ls={-0.12}>63 km W of Nanwalek, Alaska</Value></Detail>
                <Detail $w={281}><Label $w={69} $ls={-0.8}>Time:</Label><Value $ls={-0.62}>16/4/2024, 4:00:15</Value></Detail>
                <Detail $w={206}><Label $w={115} $ls={-0.6}>Longitud:</Label><Value $ls={-0.55}>-153.033</Value></Detail>
              </DetailRow>
              <DetailRow>
                <Detail $w={192}><Label $w={93} $ls={-0.95}>Latitud:</Label><Value $ls={-0.85}>59.3748</Value></Detail>
                <Detail $w={184}><Label $w={137} $ls={-0.65}>Magnitude:</Label><Value $ls={-0.9}>1.6</Value></Detail>
                <Detail $w={116}><Label $w={100} $ls={-1.25}>Tsunami:</Label></Detail>
                <Detail $w={296}><Label $w={133} $ls={-0.82}>External id:</Label><Value $ls={-0.42}>ak0244x3v2gt</Value></Detail>
                <ExternalLink>External Url</ExternalLink>
              </DetailRow>
            </Details>
            <MapBox>
              <MapDrawing />
              <ZoomControl>
                <ZoomButton>{line(12, 12, "M6 0V12M0 6H12", 2, "#000")}</ZoomButton>
                <ZoomButton>{line(12, 12, "M0 6H12", 2, "#000")}</ZoomButton>
              </ZoomControl>
              <Attribution>
                <svg width="12" height="8" viewBox="0 0 12 8"><path fill="#4C7BE1" d="M0 0h12v4H0z" /><path fill="#FFD500" d="M0 4h12v4H0z" /></svg>
                <a>Leaflet</a>{" | © "}<a>OpenStreetMap</a>{" contributors"}
              </Attribution>
            </MapBox>
            <CommentForm>
              <CommentInput>Empieza escribiendo algo aquí...</CommentInput>
              <SendButton>Enviar</SendButton>
            </CommentForm>
            <Comment>Este es un comentario</Comment>
          </Main>
        </Page>
        <Scrollbar>
          <ScrollArrow><svg width="7" height="4" viewBox="0 0 7 4"><path d="M0 4L3.500 0 7 4Z" fill="#505050" /></svg></ScrollArrow>
          <Thumb />
          <ScrollArrow><svg width="7" height="4" viewBox="0 0 7 4"><path d="M0 0L3.500 4 7 0Z" fill="#505050" /></svg></ScrollArrow>
        </Scrollbar>
      </Viewport>
    </Window>
  );
}
